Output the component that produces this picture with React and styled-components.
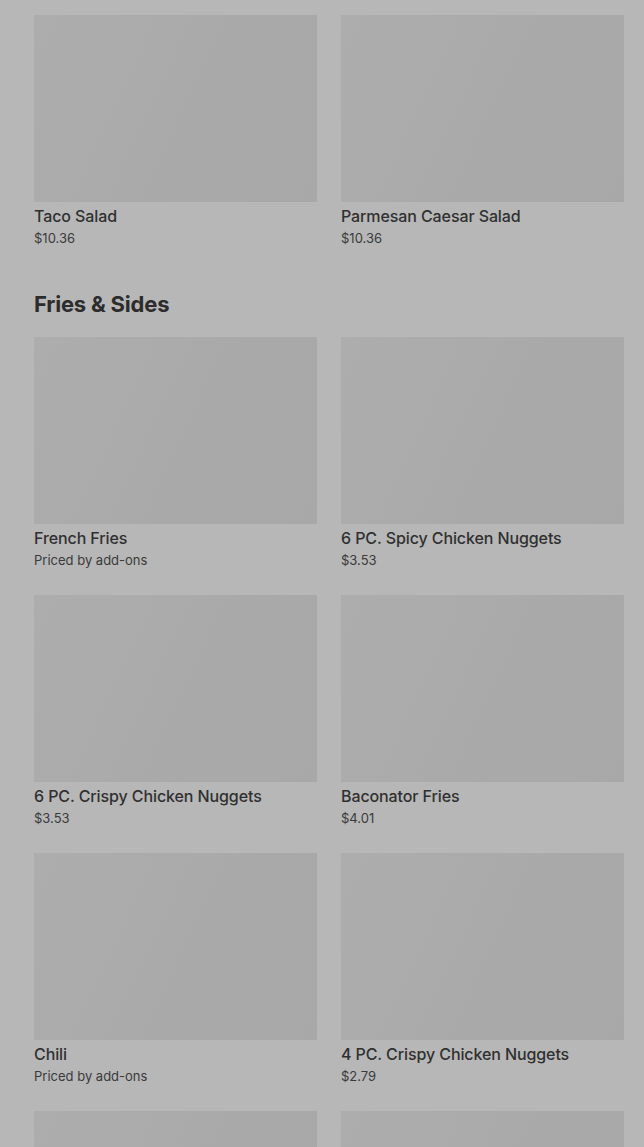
import React from 'react';
import styled, { createGlobalStyle } from 'styled-components';

const Global = createGlobalStyle`
  html, body {
    margin: 0;
    padding: 0;
    background: #b7b7b7;
  }
  body {
    font-family: Inter, "Noto Sans", Roboto, sans-serif;
    -webkit-font-smoothing: antialiased;
  }
`;

const Page = styled.div`
  padding: 15px 20px 0 34px;
  height: 1147px;
  overflow: hidden;
  box-sizing: border-box;
`;

const Section = styled.section`
  margin-bottom: 42px;
`;

const Heading = styled.h2`
  margin: 0 0 19px;
  font-size: 22px;
  line-height: 28px;
  font-weight: 700;
  letter-spacing: -0.2px;
  color: #2c2c2c;
`;

const Grid = styled.div`
  display: grid;
  grid-template-columns: 1fr 1fr;
  column-gap: 24px;
  row-gap: 25px;
`;

const Card = styled.div`
  display: flex;
  flex-direction: column;
`;

const Thumb = styled.div`
  height: 187px;
  background: linear-gradient(115deg, #adadad 0%, #ababab 35%, #a9a9a9 60%, #a8a8a8 100%);
`;

const Title = styled.div`
  margin-top: 2px;
  font-size: 16px;
  line-height: 24px;
  font-weight: 500;
  letter-spacing: -0.1px;
  color: #303030;
`;

const Price = styled.div`
  padding-top: 1px;
  font-size: 13px;
  line-height: 19px;
  color: #3a3a3a;
`;

const Item = ({ name, price }) => (
  <Card>
    <Thumb />
    <Title>{name}</Title>
    <Price>{price}</Price>
  </Card>
);

const salads = [
  { name: 'Taco Salad', price: '$10.36' },
  { name: 'Parmesan Caesar Salad', price: '$10.36' },
];

const sides = [
  { name: 'French Fries', price: 'Priced by add-ons' },
  { name: '6 PC. Spicy Chicken Nuggets', price: '$3.53' },
  { name: '6 PC. Crispy Chicken Nuggets', price: '$3.53' },
  { name: 'Baconator Fries', price: '$4.01' },
  { name: 'Chili', price: 'Priced by add-ons' },
  { name: '4 PC. Crispy Chicken Nuggets', price: '$2.79' },
  { name: '', price: '' },
  { name: '', price: '' },
];

export default function App() {
  return (
    <Page>
      <Global />
      <Section>
        <Grid>
          {salads.map((it, i) => <Item key={i} {...it} />)}
        </Grid>
      </Section>
      <Section>
        <Heading>Fries &amp; Sides</Heading>
        <Grid>
          {sides.map((it, i) => <Item key={i} {...it} />)}
        </Grid>
      </Section>
    </Page>
  );
}
